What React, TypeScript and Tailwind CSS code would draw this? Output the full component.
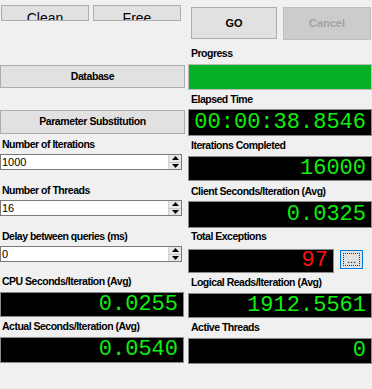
import React from 'react'

const FONT = { fontFamily: '"Liberation Sans", Arial, sans-serif' }

const Label = ({ children, mt, left }: { children: React.ReactNode; mt: string; left?: boolean }) => (
  <div className={`h-[13px] ${mt} ${left ? 'pl-[2px]' : 'pl-[3px]'} text-[10.5px] leading-[13px] font-bold text-black whitespace-nowrap tracking-[-0.5px]`}>
    {children}
  </div>
)

const Display = ({ value, h, mt, w = 'w-full', red }: { value: string; h: string; mt: string; w?: string; red?: boolean }) => (
  <div
    className={`${h} ${mt} ${w} bg-black border border-[#8a8a8a] flex items-center justify-end pr-[5px] text-[22px] leading-none ${red ? 'text-[#ff1010]' : 'text-[#10ee10]'}`}
    style={{ fontFamily: '"Liberation Mono", "DejaVu Sans Mono", monospace' }}
  >
    {value}
  </div>
)

const Spinner = ({ value, mt }: { value: string; mt: string }) => (
  <div className={`${mt} h-[16px] w-[182px] bg-white border border-[#7a7a7a] flex items-stretch`}>
    <div className="flex-1 text-[11px] leading-[14px] pl-[1px] text-black">{value}</div>
    <div className="w-[13px] flex flex-col bg-[#e8e8e8] border-l border-[#d0d0d0]">
      <div className="flex-1 flex items-center justify-center border-b border-[#c8c8c8]">
        <svg width="7" height="4" viewBox="0 0 7 4"><path d="M0 4 L3.5 0 L7 4 Z" fill="#000" /></svg>
      </div>
      <div className="flex-1 flex items-center justify-center">
        <svg width="7" height="4" viewBox="0 0 7 4"><path d="M0 0 L3.5 4 L7 0 Z" fill="#000" /></svg>
      </div>
    </div>
  </div>
)

export default function App() {
  return (
    <div className="w-[372px] h-[389px] bg-[#f0f0f0] overflow-hidden flex" style={FONT}>
      {/* left column */}
      <div className="w-[188px] flex flex-col">
        <div className="mt-[5px] flex gap-[4px] pl-[1px]">
          <div className="w-[88px] h-[16px] bg-[#e1e1e1] border border-[#adadad] overflow-hidden text-center text-[14px] leading-[16px] pt-[4px] text-black">Clean</div>
          <div className="w-[88px] h-[16px] bg-[#e1e1e1] border border-[#adadad] overflow-hidden text-center text-[14px] leading-[16px] pt-[4px] text-black">Free</div>
        </div>
        <div className="mt-[44px] w-[185px] h-[23px] bg-[#e1e1e1] border border-[#adadad] flex items-center justify-center text-[10.5px] font-bold tracking-[-0.4px]">
          Database
        </div>
        <div className="mt-[22px] w-[185px] h-[24px] bg-[#e1e1e1] border border-[#adadad] flex items-center justify-center text-[10.5px] font-bold tracking-[-0.4px]">
          Parameter Substitution
        </div>
        <Label mt="mt-[4px]" left>Number of Iterations</Label>
        <Spinner value="1000" mt="mt-[3px]" />
        <Label mt="mt-[14px]" left>Number of Threads</Label>
        <Spinner value="16" mt="mt-[3px]" />
        <Label mt="mt-[14px]" left>Delay between queries (ms)</Label>
        <Spinner value="0" mt="mt-[3px]" />
        <Label mt="mt-[13px]" left>CPU Seconds/Iteration (Avg)</Label>
        <Display value="0.0255" h="h-[25px]" mt="mt-[4px]" w="w-[184px]" />
        <Label mt="mt-[3px]" left>Actual Seconds/Iteration (Avg)</Label>
        <Display value="0.0540" h="h-[26px]" mt="mt-[4px]" w="w-[184px]" />
      </div>

      {/* right column */}
      <div className="w-[184px] flex flex-col">
        <div className="mt-[7px] flex gap-[6px] pl-[3px]">
          <div className="w-[86px] h-[32px] bg-[#e1e1e1] border border-[#adadad] flex items-center justify-center text-[11px] font-bold">GO</div>
          <div className="w-[88px] h-[33px] bg-[#cccccc] border border-[#bfbfbf] flex items-center justify-center text-[11px] font-bold text-[#a3a3a3]">Cancel</div>
        </div>
        <Label mt="mt-[7px]">Progress</Label>
        <div className="mt-[4px] h-[26px] w-full bg-[#06b025] border border-[#bcbcbc]" />
        <Label mt="mt-[3px]">Elapsed Time</Label>
        <Display value="00:00:38.8546" h="h-[27px]" mt="mt-[3px]" />
        <Label mt="mt-[3px]">Iterations Completed</Label>
        <Display value="16000" h="h-[25px]" mt="mt-[4px]" />
        <Label mt="mt-[4px]">Client Seconds/Iteration (Avg)</Label>
        <Display value="0.0325" h="h-[27px]" mt="mt-[3px]" />
        <Label mt="mt-[2px]">Total Exceptions</Label>
        <div className="mt-[6px] flex items-start">
          <Display value="97" h="h-[24px]" mt="mt-0" w="w-[146px]" red />
          <div className="ml-[6px] mt-[1px] w-[23px] h-[19px] bg-[#e1e1e1] border border-[#0078d7] p-[2px]">
            <div className="w-full h-full border border-dotted border-[#333] flex items-end justify-center text-[11px] leading-[10px] pb-[1px]">...</div>
          </div>
        </div>
        <Label mt="mt-[3px]">Logical Reads/Iteration (Avg)</Label>
        <Display value="1912.5561" h="h-[25px]" mt="mt-[4px]" />
        <Label mt="mt-[3px]">Active Threads</Label>
        <Display value="0" h="h-[26px]" mt="mt-[4px]" />
      </div>
    </div>
  )
}
